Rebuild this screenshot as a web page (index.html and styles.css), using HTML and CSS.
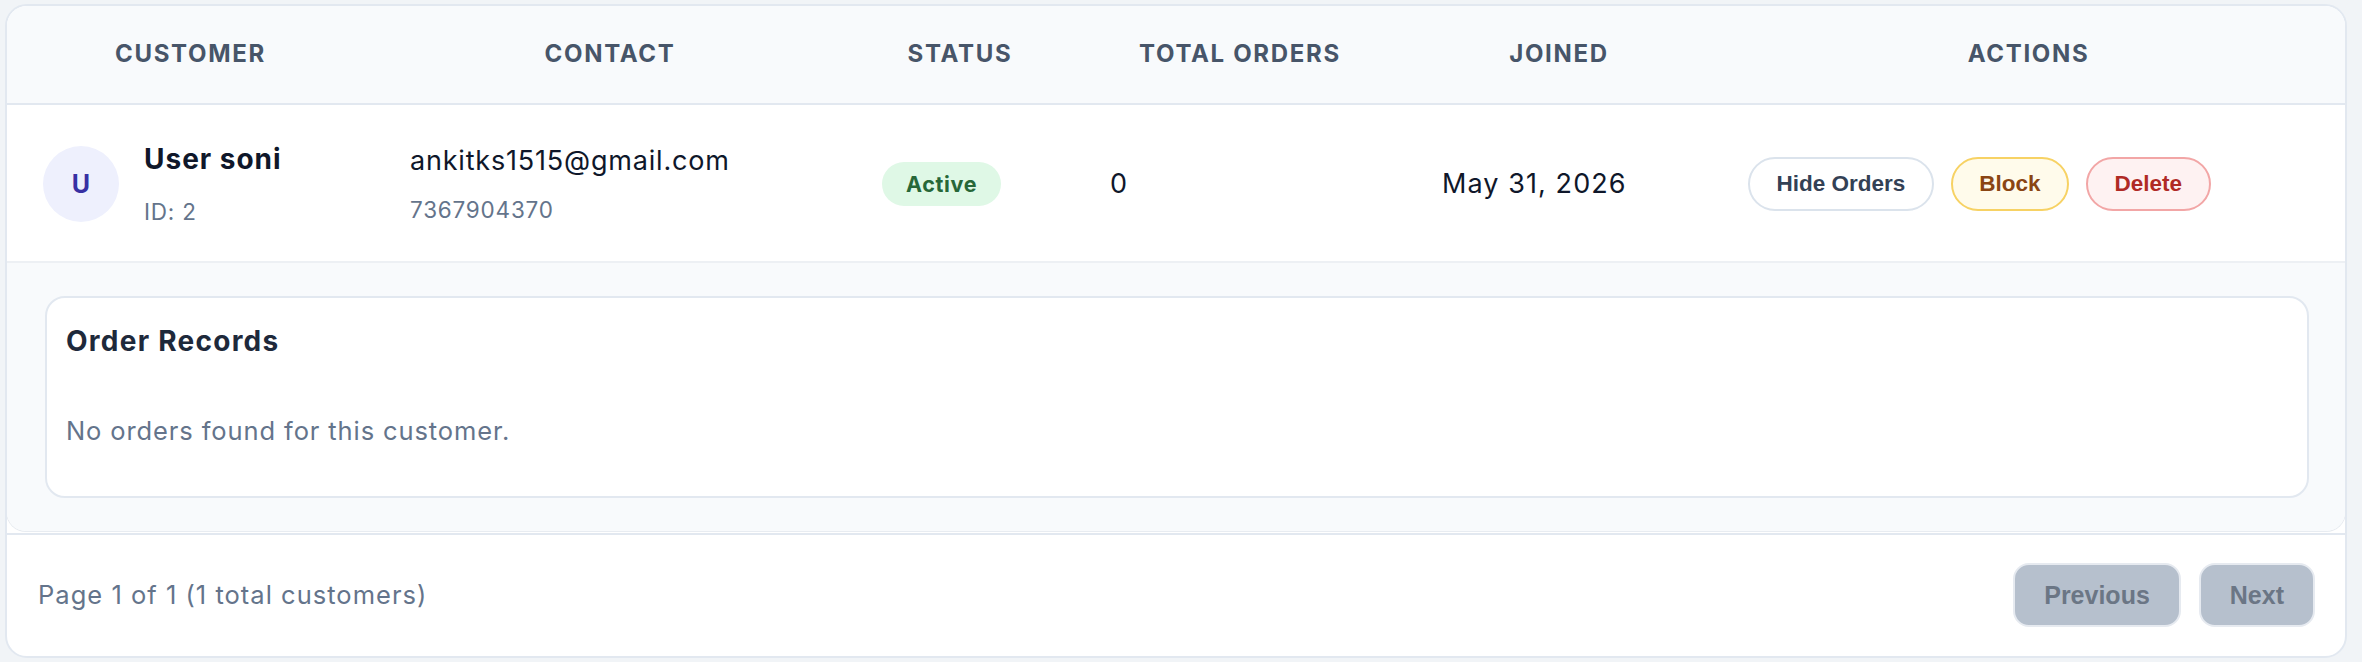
FILE: index.html
```html
<!DOCTYPE html>
<html lang="en">
<head>
<meta charset="utf-8">
<title>Customers</title>
<link rel="stylesheet" href="styles.css">
</head>
<body>
<div class="page">
  <div class="card">
    <div class="table-wrap">
      <table class="customers">
        <colgroup>
          <col class="c-customer">
          <col class="c-contact">
          <col class="c-status">
          <col class="c-orders">
          <col class="c-joined">
          <col class="c-actions">
        </colgroup>
        <thead>
          <tr>
            <th>Customer</th>
            <th>Contact</th>
            <th>Status</th>
            <th>Total Orders</th>
            <th>Joined</th>
            <th>Actions</th>
          </tr>
        </thead>
        <tbody>
          <tr class="row">
            <td>
              <div class="cust">
                <div class="avatar">U</div>
                <div class="cust-info">
                  <div class="name">User soni</div>
                  <div class="sub">ID: 2</div>
                </div>
              </div>
            </td>
            <td>
              <div class="email">ankitks1515@gmail.com</div>
              <div class="sub phone">7367904370</div>
            </td>
            <td><span class="badge">Active</span></td>
            <td class="num">0</td>
            <td class="num">May 31, 2026</td>
            <td>
              <div class="actions">
                <button class="btn btn-plain">Hide Orders</button>
                <button class="btn btn-warn">Block</button>
                <button class="btn btn-danger">Delete</button>
              </div>
            </td>
          </tr>
          <tr class="expand">
            <td colspan="6">
              <div class="panel">
                <h3 class="panel-title">Order Records</h3>
                <p class="empty">No orders found for this customer.</p>
              </div>
            </td>
          </tr>
        </tbody>
      </table>
    </div>
    <div class="footer">
      <span class="page-info">Page 1 of 1 (1 total customers)</span>
      <div class="pager">
        <button class="pbtn" disabled>Previous</button>
        <button class="pbtn" disabled>Next</button>
      </div>
    </div>
  </div>
</div>
</body>
</html>
```

FILE: styles.css
```css
* { box-sizing: border-box; }

html, body {
  margin: 0;
  padding: 0;
  background: #f1f4f7;
}

body {
  font-family: Inter, "Noto Sans", sans-serif;
  color: #0f172a;
}

.page {
  padding: 4px 15px 2px 5px;
}

.card {
  background: #ffffff;
  border: 2px solid #e2e8f0;
  border-radius: 22px;
  overflow: hidden;
}

.table-wrap {
  border: 1px solid #e8ecf1;
  border-top: none;
  border-radius: 0 0 20px 20px;
  overflow: hidden;
  margin: 0 -1px;
}

.customers {
  width: 100%;
  border-collapse: collapse;
  table-layout: fixed;
}

.c-customer { width: 367px; }
.c-contact { width: 472px; }
.c-status { width: 228px; }
.c-orders { width: 332px; }
.c-joined { width: 306px; }
.c-actions { width: auto; }

.customers thead th {
  background: #f8fafc;
  color: #475569;
  font-size: 24px;
  font-weight: 700;
  letter-spacing: 0.07em;
  text-transform: uppercase;
  text-align: center;
  line-height: 36px;
  padding: 30px 36px 31px;
  border-bottom: 2px solid #e2e8f0;
}

.row td {
  padding: 34px 36px 32px;
  vertical-align: middle;
  text-align: left;
  border-bottom: 2px solid #edf0f4;
  background: #fff;
}

.cust {
  display: flex;
  align-items: center;
  gap: 25px;
}

.avatar {
  width: 76px;
  height: 76px;
  flex: none;
  border-radius: 50%;
  background: #eef0fd;
  color: #3730a3;
  font-weight: 700;
  font-size: 25px;
  display: flex;
  align-items: center;
  justify-content: center;
}

.name {
  font-size: 28px;
  line-height: 40px;
  font-weight: 700;
  letter-spacing: 0.035em;
  color: #0f172a;
}

.sub {
  font-size: 22.5px;
  line-height: 34px;
  letter-spacing: 0.035em;
  color: #64748b;
  margin-top: 16px;
}

.email {
  font-size: 27px;
  line-height: 40px;
  letter-spacing: 0.03em;
  color: #0f172a;
}

.phone {
  margin-top: 12px;
}

.num {
  font-size: 27px;
  line-height: 40px;
  letter-spacing: 0.04em;
  color: #0f172a;
}

.badge {
  display: inline-block;
  background: #dff8e6;
  color: #276738;
  font-size: 21.5px;
  font-weight: 700;
  letter-spacing: 0.03em;
  line-height: 30px;
  padding: 7px 24px;
  border-radius: 999px;
}

.actions {
  display: flex;
  gap: 17px;
  align-items: center;
}

.btn {
  font-family: "Liberation Sans", Arial, sans-serif;
  font-size: 22.5px;
  font-weight: 700;
  line-height: 26px;
  padding: 12px 26.5px;
  border-radius: 999px;
  border: 2px solid;
  cursor: pointer;
}

.btn-plain {
  background: #ffffff;
  border-color: #dbe3ec;
  color: #334155;
}

.btn-warn {
  background: #fffbeb;
  border-color: #f7d264;
  color: #8a4513;
}

.btn-danger {
  background: #fef2f2;
  border-color: #f2a6a6;
  color: #b02a25;
}

.expand td {
  background: #f8fafc;
  padding: 33px 36px 33px 38px;
}

.panel {
  background: #ffffff;
  border: 2px solid #e2e8f0;
  border-radius: 20px;
  padding: 23px 19px 24px;
}

.panel-title {
  margin: 0;
  font-size: 28px;
  line-height: 40px;
  font-weight: 700;
  letter-spacing: 0.045em;
  color: #1e293b;
}

.empty {
  margin: 50px 0 21px;
  font-size: 25.5px;
  line-height: 40px;
  letter-spacing: 0.035em;
  color: #64748b;
}

.footer {
  display: flex;
  align-items: center;
  justify-content: space-between;
  border-top: 2px solid #e2e8f0;
  margin-top: 1px;
  padding: 28px 30px 29px 31px;
}

.page-info {
  font-size: 25.5px;
  line-height: 36px;
  letter-spacing: 0.04em;
  color: #64748b;
}

.pager {
  display: flex;
  gap: 18px;
}

.pbtn {
  font-family: "Liberation Sans", Arial, sans-serif;
  font-size: 25px;
  font-weight: 700;
  line-height: 28px;
  height: 64px;
  padding: 0 29px;
  border: 2px solid #e6eaf0;
  border-radius: 16px;
  background: #b6c0cd;
  color: #6b7685;
}
```
